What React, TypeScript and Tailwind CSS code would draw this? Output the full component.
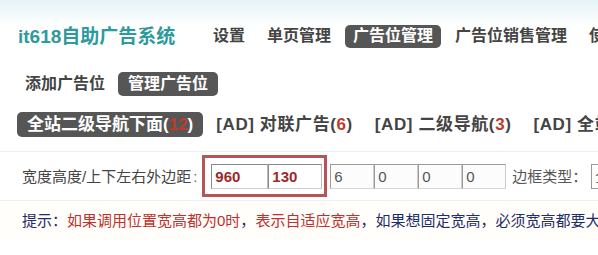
import React from "react";

const navItems = [
  { label: "设置", active: false },
  { label: "单页管理", active: false },
  { label: "广告位管理", active: true },
  { label: "广告位销售管理", active: false },
  { label: "使用帮助", active: false },
];

const adGroups = [
  { label: "[AD] 对联广告", count: 6 },
  { label: "[AD] 二级导航", count: 3 },
  { label: "[AD] 全站底部", count: 2 },
];

const sizeInputs = ["6", "0", "0", "0"];

export default function App() {
  return (
    <div className="relative h-[255px] w-[598px] overflow-hidden bg-white font-['Liberation_Sans','Noto_Sans_CJK_SC',sans-serif] text-[#333]">
      <div className="absolute inset-x-0 top-0 h-[26px] bg-gradient-to-b from-[#e4f3f7] to-white" />

      <header className="relative mt-[12px] flex h-[48px] items-center whitespace-nowrap">
        <h1 className="ml-[18px] w-[187px] shrink-0 text-[19px] font-bold leading-none text-[#2f9a9c]">
          it618自助广告系统
        </h1>
        <nav className="flex items-center gap-[6px]">
          {navItems.map((item) => (
            <span
              key={item.label}
              className={`flex h-[23px] items-center rounded-[5px] px-[8px] text-[16px] font-bold leading-none ${
                item.active ? "bg-[#565656] text-white" : "text-[#444]"
              }`}
            >
              {item.label}
            </span>
          ))}
        </nav>
      </header>

      <div className="mt-[12px] flex h-[24px] items-center whitespace-nowrap pl-[25px] text-[16px] font-bold leading-none">
        <span className="text-[#444]">添加广告位</span>
        <span className="ml-[13px] flex h-[24px] items-center rounded-[5px] bg-[#565656] px-[10px] text-white">
          管理广告位
        </span>
      </div>

      <div className="mt-[16px] flex h-[25px] items-center whitespace-nowrap pl-[17px] text-[17px] font-bold leading-none">
        <span className="flex h-[25px] items-center rounded-[5px] bg-[#565656] px-[10px] text-white">
          全站二级导航下面(<span className="text-[#c0392b]">12</span>)
        </span>
        {adGroups.map((group, i) => (
          <span
            key={group.label}
            className={`${i === 0 ? "ml-[13px]" : "ml-[22px]"} tracking-[0.6px] text-[#444]`}
          >
            {group.label}(<span className="text-[#c0392b]">{group.count}</span>)
          </span>
        ))}
      </div>

      <div className="mt-[14px] flex h-[49px] items-center whitespace-nowrap border-t border-[#eeeeee] pl-[22px] text-[15px] leading-none">
        <span className="text-[#444]">宽度高度/上下左右外边距</span>
        <span className="ml-[2px] text-[#666]">:</span>
        <div className="ml-[5px] flex h-[42px] items-center border-[3px] border-[#b65456] pl-[6px] pr-[2px]">
          <input
            readOnly
            value="960"
            className="h-[25px] w-[57px] border border-[#8a8a8a] border-r-[#bbb] border-b-[#ccc] bg-white px-[3px] text-[15px] font-bold text-[#9b2a2a] outline-none"
          />
          <input
            readOnly
            value="130"
            className="h-[25px] w-[54px] border border-[#8a8a8a] border-r-[#bbb] border-b-[#ccc] bg-white px-[3px] text-[15px] font-bold text-[#9b2a2a] outline-none"
          />
        </div>
        <div className="ml-[3px] flex">
          {sizeInputs.map((v, i) => (
            <input
              key={i}
              readOnly
              value={v}
              className="h-[25px] w-[44px] border border-[#9a9a9a] border-r-[#ccc] border-b-[#d6d6d6] bg-[#fcfcfc] px-[3px] text-[15px] text-[#555] outline-none"
            />
          ))}
        </div>
        <span className="ml-[6px] text-[#555]">边框类型：</span>
        <div className="ml-[4px] flex h-[25px] w-[80px] items-center border border-[#999] bg-white px-[3px] text-[#555]">
          全站
        </div>
      </div>

      <div className="flex h-[40px] items-center whitespace-nowrap border-t border-[#f0f0f0] bg-[#fffefa] pl-[22px] text-[15px] leading-none text-[#1f2d6b]">
        <span>提示：</span>
        <span className="text-[#c0302c]">如果调用位置宽高都为0时</span>
        <span>，</span>
        <span className="text-[#c0302c]">表示自适应宽高</span>
        <span>，如果想固定宽高，必须宽高都要大于0</span>
      </div>
    </div>
  );
}
